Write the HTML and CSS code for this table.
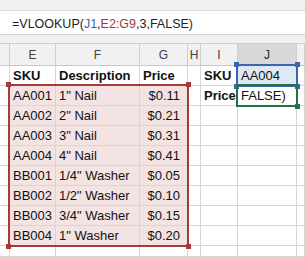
FILE: index.html
```html
<!DOCTYPE html>
<html>
<head>
<meta charset="utf-8">
<link rel="stylesheet" href="styles.css">
</head>
<body>
<div class="top"></div>
<div class="formula">=VLOOKUP(<span class="ref-blue">J1</span>,<span class="ref-red">E2:G9</span>,3,FALSE)</div>
<div class="strip"></div>
<div class="sheet">
  <div class="hd"></div><div class="hd">E</div><div class="hd">F</div><div class="hd">G</div><div class="hd">H</div><div class="hd">I</div><div class="hd active">J</div><div class="hd"></div>

  <div class="c"></div><div class="c b">SKU</div><div class="c b">Description</div><div class="c b">Price</div><div class="c"></div><div class="c b">SKU</div><div class="c blue">AA004</div><div class="c"></div>

  <div class="c"></div><div class="c p">AA001</div><div class="c p">1" Nail</div><div class="c p r">$0.11</div><div class="c"></div><div class="c b">Price</div><div class="c">FALSE)</div><div class="c"></div>
  <div class="c"></div><div class="c p">AA002</div><div class="c p">2" Nail</div><div class="c p r">$0.21</div><div class="c"></div><div class="c"></div><div class="c"></div><div class="c"></div>
  <div class="c"></div><div class="c p">AA003</div><div class="c p">3" Nail</div><div class="c p r">$0.31</div><div class="c"></div><div class="c"></div><div class="c"></div><div class="c"></div>
  <div class="c"></div><div class="c p">AA004</div><div class="c p">4" Nail</div><div class="c p r">$0.41</div><div class="c"></div><div class="c"></div><div class="c"></div><div class="c"></div>
  <div class="c"></div><div class="c p">BB001</div><div class="c p">1/4" Washer</div><div class="c p r">$0.05</div><div class="c"></div><div class="c"></div><div class="c"></div><div class="c"></div>
  <div class="c"></div><div class="c p">BB002</div><div class="c p">1/2" Washer</div><div class="c p r">$0.10</div><div class="c"></div><div class="c"></div><div class="c"></div><div class="c"></div>
  <div class="c"></div><div class="c p">BB003</div><div class="c p">3/4" Washer</div><div class="c p r">$0.15</div><div class="c"></div><div class="c"></div><div class="c"></div><div class="c"></div>
  <div class="c"></div><div class="c p">BB004</div><div class="c p">1" Washer</div><div class="c p r">$0.20</div><div class="c"></div><div class="c"></div><div class="c"></div><div class="c"></div>
  <div class="c"></div><div class="c"></div><div class="c"></div><div class="c"></div><div class="c"></div><div class="c"></div><div class="c"></div><div class="c"></div>

  <div class="sel sel-range"><i class="h tl"></i><i class="h tr"></i><i class="h bl"></i><i class="h br"></i></div>
  <div class="sel sel-j1"><i class="h tl"></i><i class="h tr"></i><i class="h bl"></i><i class="h br"></i></div>
  <div class="sel sel-j2"><i class="h br"></i></div>
</div>
</body>
</html>
```
FILE: styles.css
```css
html, body {
  margin: 0;
  padding: 0;
  background: #ffffff;
  font-family: "Liberation Sans", Arial, sans-serif;
  width: 305px;
  height: 257px;
  overflow: hidden;
}

.top {
  height: 10px;
  background: #f1f1f1;
  border-bottom: 1px solid #dcdcdc;
}

.formula {
  height: 24px;
  box-sizing: border-box;
  padding: 2px 0 0 12px;
  line-height: 22px;
  font-size: 12.5px;
  color: #222;
  background: #fff;
  border-bottom: 1px solid #d4d4d4;
  white-space: nowrap;
}

.ref-blue { color: #3b62a8; }
.ref-red { color: #9c3a35; }

.strip {
  height: 8px;
  background: #f1f1f1;
}

.sheet {
  position: relative;
  display: grid;
  grid-template-columns: 10px 46px 84px 48px 13px 37px 59px 1fr;
  grid-template-rows: 22px repeat(9, 20px) 1fr;
  height: 213px;
  border-top: 1px solid #d0d0d0;
  background: #fff;
}

.hd {
  box-sizing: border-box;
  background: #f1f1f1;
  border-right: 1px solid #cfcfcf;
  border-bottom: 1px solid #c8c8c8;
  text-align: center;
  font-size: 12px;
  line-height: 21px;
  padding-top: 1px;
  color: #404040;
}

.hd.active {
  background: #d8d8d8;
  border-bottom: 2px solid #217346;
  color: #2a2a2a;
}

.c {
  box-sizing: border-box;
  border-right: 1px solid #d6d6d6;
  border-bottom: 1px solid #d6d6d6;
  font-size: 13px;
  line-height: 20px;
  padding: 0 3px;
  color: #111;
  white-space: nowrap;
  overflow: hidden;
}

.b { font-weight: bold; }
.p { background: #f4e3e3; }
.r { text-align: right; padding-right: 7px; }
.blue { background: #dfe8f3; }

.sel {
  position: absolute;
  box-sizing: border-box;
  border: 2px solid;
}

.sel-range {
  grid-column: 2 / 5;
  grid-row: 3 / 11;
  top: -2px; left: -2px; right: -1px; bottom: -1px;
  border-color: #a33b3b;
  color: #a33b3b;
}

.sel-j1 {
  grid-column: 7 / 8;
  grid-row: 2 / 3;
  top: -2px; left: -2px; right: -1px; bottom: -1px;
  border-color: #3a66ab;
  color: #3a66ab;
}

.sel-j2 {
  grid-column: 7 / 8;
  grid-row: 3 / 4;
  top: -2px; left: -2px; right: -1px; bottom: -1px;
  border-color: #217346;
  color: #217346;
}

.h {
  position: absolute;
  width: 5px;
  height: 5px;
  background: currentColor;
}
.h.tl { left: -4px; top: -4px; }
.h.tr { right: -4px; top: -4px; }
.h.bl { left: -4px; bottom: -4px; }
.h.br { right: -4px; bottom: -4px; }
```
